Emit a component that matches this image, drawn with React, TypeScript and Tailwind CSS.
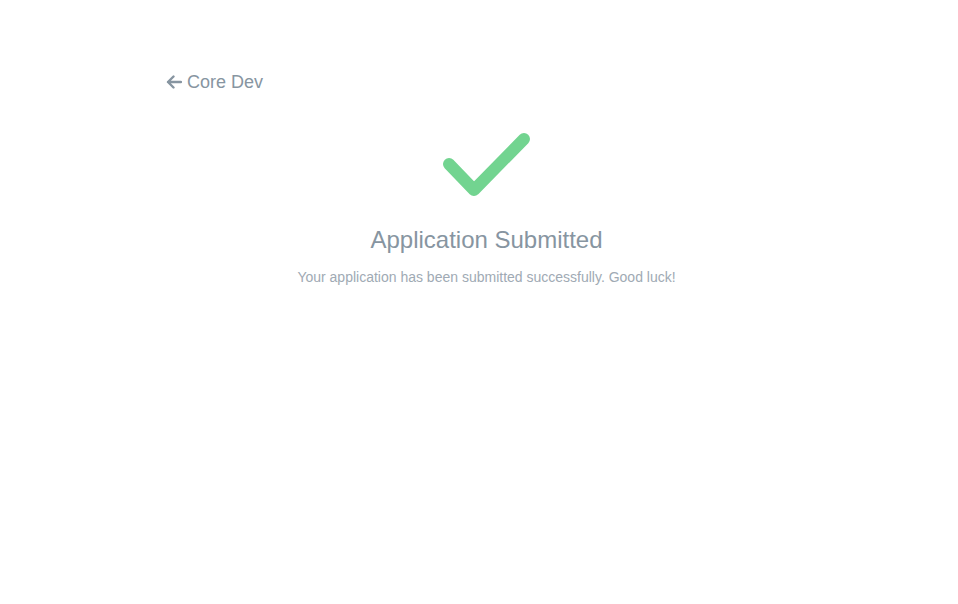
import React from 'react';

const App: React.FC = () => {
  return (
    <div className="min-h-screen bg-white font-['Liberation_Sans',Arial,sans-serif]">
      <div className="w-[641px] ml-[166px] pt-[71px]">
        <a href="#" className="flex items-center gap-[5px] text-[18px] leading-[22px] text-[#8795a1]">
          <svg width="16" height="14" viewBox="0 0 16 14" className="shrink-0">
            <path
              d="M15 7 H2 M7.5 1.5 L2 7 L7.5 12.5"
              fill="none"
              stroke="currentColor"
              strokeWidth="2.4"
              strokeLinecap="round"
              strokeLinejoin="round"
            />
          </svg>
          Core Dev
        </a>

        <div className="flex flex-col items-center mt-[40px]">
          <svg width="92" height="69" viewBox="0 0 92 69" className="ml-[1px]">
            <path
              d="M8 31 L33 57 L83 6"
              fill="none"
              stroke="#72d490"
              strokeWidth="12"
              strokeLinecap="round"
              strokeLinejoin="round"
            />
          </svg>
          <h1 className="mt-[24px] text-[24px] leading-[28px] text-[#8795a1]">Application Submitted</h1>
          <p className="mt-[14px] text-[14px] leading-[18px] text-[#a0aab4]">
            Your application has been submitted successfully. Good luck!
          </p>
        </div>
      </div>
    </div>
  );
};

export default App;
